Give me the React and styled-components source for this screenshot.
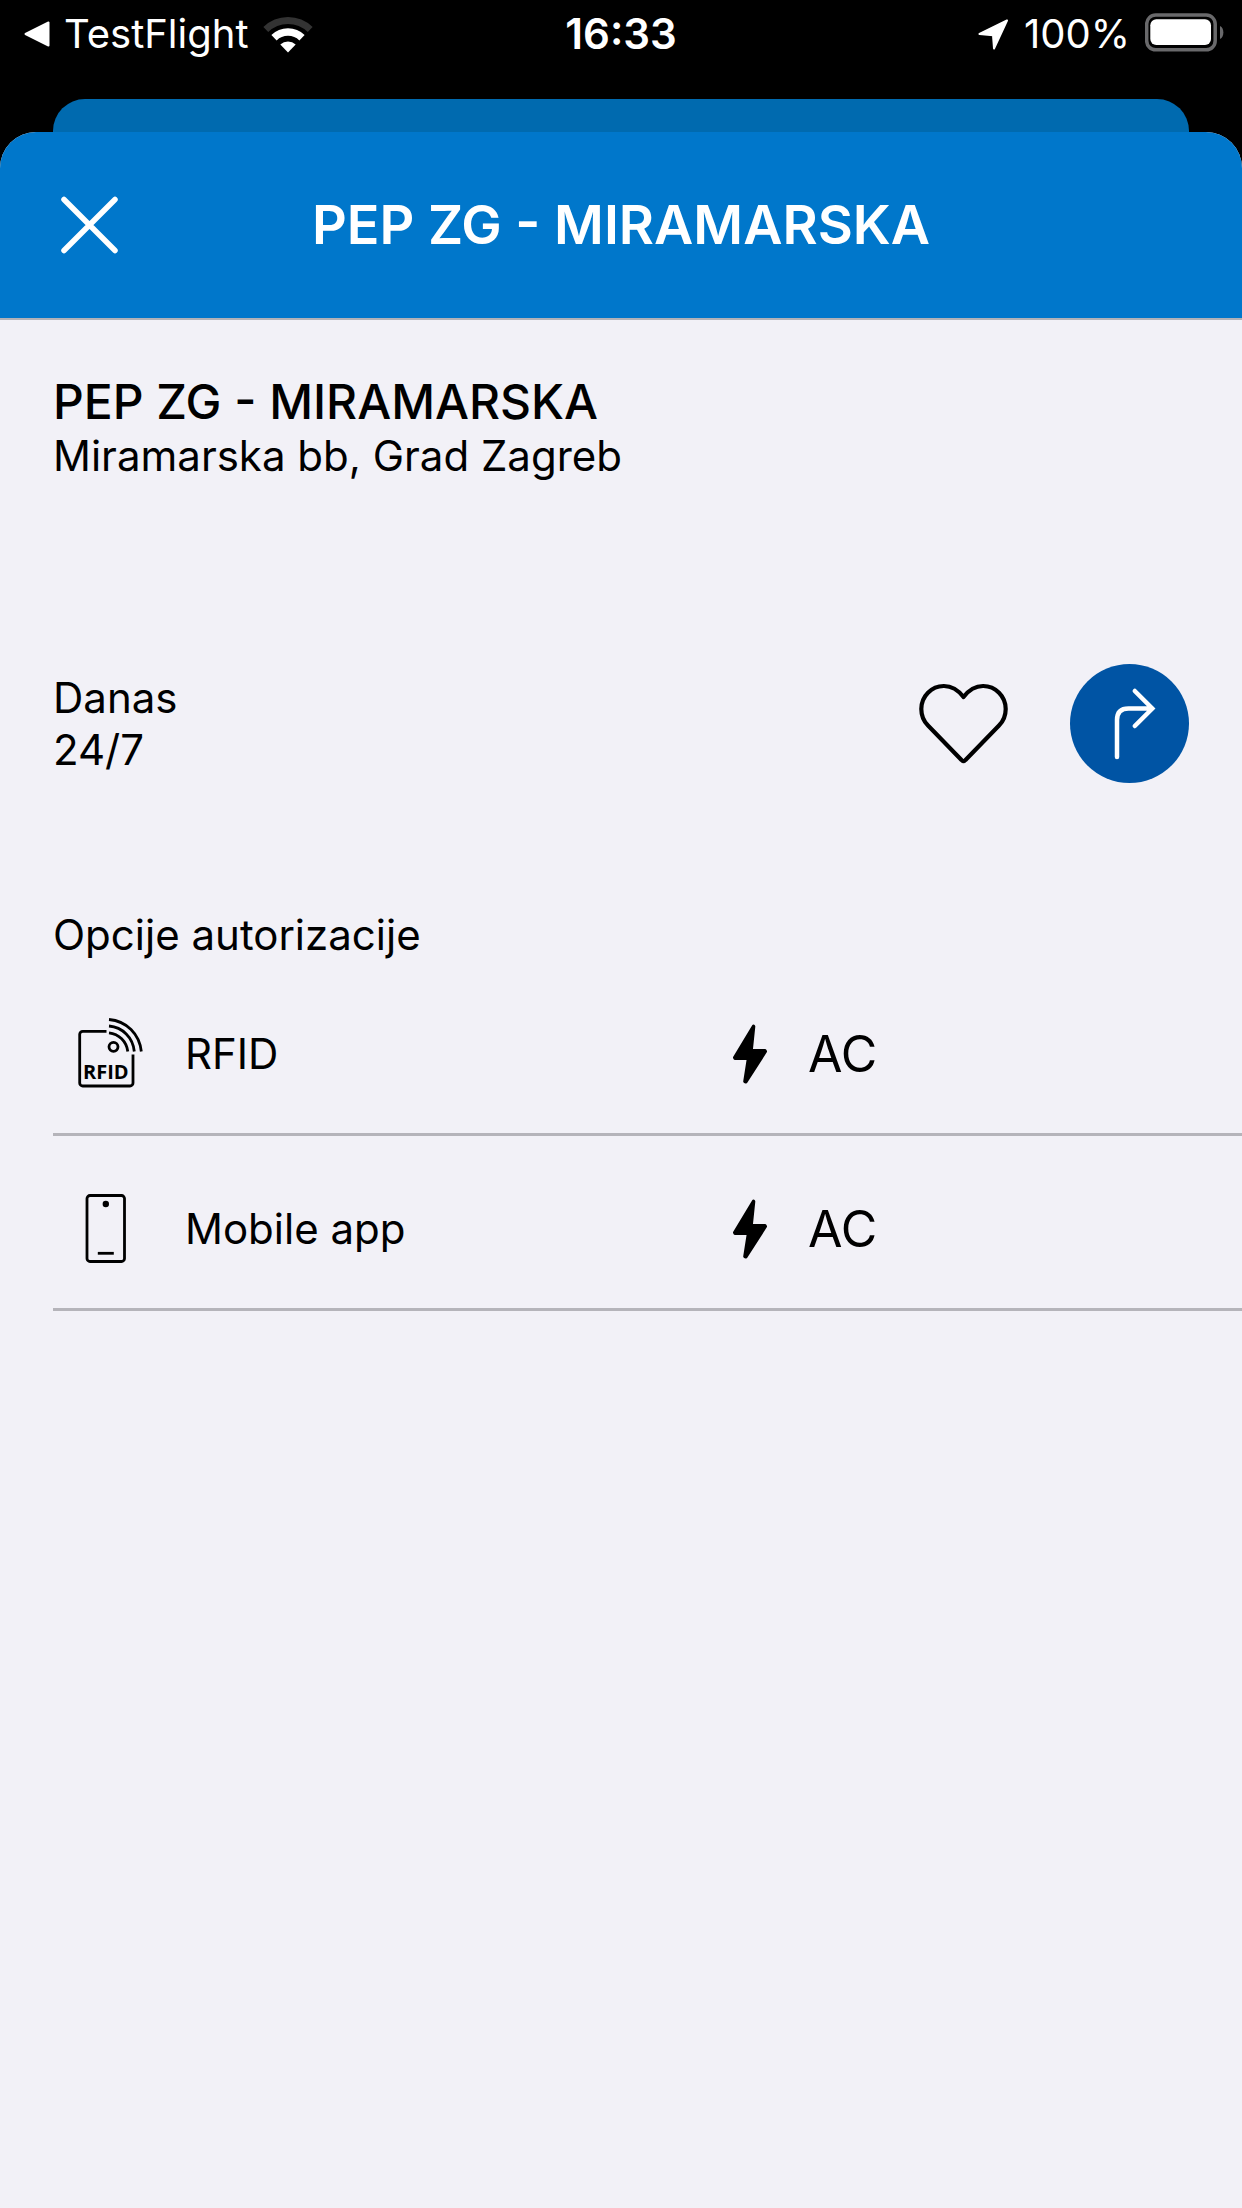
import React from 'react';
import styled, { createGlobalStyle } from 'styled-components';

const GlobalStyle = createGlobalStyle`
  *, *::before, *::after { box-sizing: border-box; }
  body {
    margin: 0;
    background: #000;
    font-family: Inter, Roboto, "Liberation Sans", sans-serif;
    color: #000;
  }
  h1, h2, h3, p, ul { margin: 0; padding: 0; }
  svg { display: block; flex: none; }
`;

const Screen = styled.div`
  display: flex;
  flex-direction: column;
  min-height: 100vh;
`;

const StatusBar = styled.div`
  display: grid;
  grid-template-columns: 1fr auto 1fr;
  align-items: center;
  height: 99px;
  padding: 0 18px 31px;
  color: #fff;
  font-size: 40px;
  line-height: 48px;
`;

const StatusGroup = styled.div`
  display: flex;
  align-items: center;
  justify-content: ${({ $end }) => ($end ? 'flex-end' : 'flex-start')};
  gap: 15px;
`;

const BackButton = styled.button`
  display: flex;
  align-items: center;
  gap: 14px;
  padding: 0 0 0 6px;
  border: 0;
  background: none;
  color: inherit;
  font: inherit;
`;

const Clock = styled.time`
  font-size: 42px;
  font-weight: 600;
`;

const SheetBehind = styled.div`
  height: 33px;
  margin: 0 53px;
  border-radius: 32px 32px 0 0;
  background: #006aaf;
`;

const Sheet = styled.main`
  flex: 1;
  display: flex;
  flex-direction: column;
  border-radius: 36px 36px 0 0;
  overflow: hidden;
  background: #f2f1f7;
`;

const SheetHeader = styled.header`
  display: grid;
  grid-template-columns: 72px 1fr 72px;
  align-items: center;
  height: 188px;
  padding: 0 53px;
  border-bottom: 2px solid #b2b2b8;
  background: #0077cb;
  color: #fff;
`;

const IconButton = styled.button`
  display: flex;
  align-items: center;
  justify-content: flex-start;
  padding: 0;
  border: 0;
  background: none;
  color: inherit;
`;

const HeaderTitle = styled.h1`
  text-align: center;
  font-size: 54px;
  font-weight: 600;
  line-height: 64px;
`;

const Content = styled.div`
  padding: 54px 0 0 53px;
`;

const StationName = styled.h2`
  font-size: 48px;
  font-weight: 500;
  line-height: 56px;
`;

const Text = styled.p`
  font-size: 42px;
  line-height: 52px;
`;

const HoursRow = styled.section`
  display: flex;
  align-items: center;
  justify-content: space-between;
  margin: 182px 53px 126px 0;
`;

const Actions = styled.div`
  display: flex;
  align-items: center;
  gap: 60px;
`;

const RouteButton = styled.button`
  display: flex;
  align-items: center;
  justify-content: center;
  width: 119px;
  height: 119px;
  padding: 0;
  border: 0;
  border-radius: 50%;
  background: #0054a4;
  color: #fff;
`;

const SectionTitle = styled.h3`
  font-size: 42px;
  font-weight: 400;
  line-height: 52px;
`;

const OptionList = styled.ul`
  list-style: none;
`;

const Option = styled.li`
  display: grid;
  grid-template-columns: 132px 14fr 13fr;
  align-items: center;
  height: 175px;
  padding-top: 13px;
  border-bottom: 3px solid #b5b4ba;
`;

const OptionIcon = styled.span`
  padding-left: 22px;
`;

const Power = styled.span`
  display: flex;
  align-items: center;
  gap: 40px;
  font-size: 50px;
  line-height: 60px;
`;

const IconText = styled.text`
  font-family: "Open Sans", "Noto Sans", sans-serif;
  font-size: 20px;
  font-weight: 700;
`;

const WifiIcon = () => (
  <svg width="50" height="38" viewBox="0 0 50 38" fill="none">
    <path d="M2.8 14.5A31.8 31.8 0 0 1 47.200 14.5" stroke="#333" strokeWidth="7" />
    <path d="M11 22.700A20 20 0 0 1 39 22.700" stroke="#fff" strokeWidth="7.500" />
    <path d="M25 37.500L17.300 29.500A11.200 11.200 0 0 1 32.700 29.500Z" fill="#fff" />
  </svg>
);

const BatteryIcon = () => (
  <svg width="79" height="44" viewBox="2 0 79 44">
    <rect x="3.700" y="3" width="68.500" height="34.800" rx="9" fill="none" stroke="#69696b" strokeWidth="3.500" />
    <rect x="7.300" y="7.300" width="60.700" height="25.700" rx="6" fill="#fff" />
    <path d="M77 14C81.500 16 81.500 25 77 27Z" fill="#69696b" />
  </svg>
);

const LocationIcon = () => (
  <svg width="31" height="31" viewBox="0 0 31 31" fill="#fff" stroke="#fff" strokeWidth="2" strokeLinejoin="round">
    <path d="M29 1.500L1.500 15L15 16.200L16 29.500Z" />
  </svg>
);

const RfidIcon = () => (
  <svg width="70" height="72" viewBox="-1 2 70 72" fill="none" stroke="#000" strokeWidth="2.800">
    <path d="M30.500 15.300H6.700a3 3 0 0 0-3 3V67a3 3 0 0 0 3 3H54a3 3 0 0 0 3-3V38.500" />
    <circle cx="37.500" cy="30.800" r="4.500" />
    <path d="M33 3.500C50.500 5 63.500 18 65.300 35.500M33 10C46.500 11.200 57 21.500 58.300 35.500M33 16.800C43 18 50.500 25.500 51.800 35.500" />
    <IconText x="7" y="63" fill="#000" stroke="none">RFID</IconText>
  </svg>
);

const PhoneIcon = () => (
  <svg width="62" height="72" viewBox="0 0 62 72" fill="none" stroke="#000" strokeWidth="2.800">
    <rect x="12" y="2.500" width="37.500" height="66" rx="3" />
    <path d="M22.800 60.300H38.800" />
    <circle cx="30.800" cy="11" r="3.200" fill="#000" stroke="none" />
  </svg>
);

const BoltIcon = () => (
  <svg width="35" height="60" viewBox="0 0 35 60" stroke="#000" strokeWidth="3" strokeLinejoin="round">
    <path d="M20.500 2L1.500 33.500L2 34.500H15.300L11.700 57.500L13 58L32.500 27.500L32 26.500H18.300L20.800 2.500Z" />
  </svg>
);

const options = [
  { label: 'RFID', power: 'AC', Icon: RfidIcon },
  { label: 'Mobile app', power: 'AC', Icon: PhoneIcon },
];

export default function App() {
  return (
    <Screen>
      <GlobalStyle />
      <StatusBar>
        <StatusGroup>
          <BackButton type="button">
            <svg width="26" height="26" viewBox="0 0 26 26" fill="#fff" stroke="#fff" strokeWidth="2" strokeLinejoin="round">
              <path d="M1.500 13L24.500 1.500V24.500Z" />
            </svg>
            TestFlight
          </BackButton>
          <WifiIcon />
        </StatusGroup>
        <Clock>16:33</Clock>
        <StatusGroup $end>
          <LocationIcon />
          <span>100%</span>
          <BatteryIcon />
        </StatusGroup>
      </StatusBar>
      <SheetBehind />
      <Sheet>
        <SheetHeader>
          <IconButton type="button" aria-label="Zatvori">
            <svg width="72" height="72" viewBox="0 0 72 72" fill="none" stroke="#fff" strokeWidth="5.500" strokeLinecap="round">
              <path d="M11 10.500L62 61.500M62 10.500L11 61.500" />
            </svg>
          </IconButton>
          <HeaderTitle>PEP ZG - MIRAMARSKA</HeaderTitle>
        </SheetHeader>
        <Content>
          <StationName>PEP ZG - MIRAMARSKA</StationName>
          <Text>Miramarska bb, Grad Zagreb</Text>
          <HoursRow>
            <div>
              <Text>Danas</Text>
              <Text>24/7</Text>
            </div>
            <Actions>
              <IconButton type="button" aria-label="Dodaj u favorite">
                <svg width="92" height="84" viewBox="0 0 92 84" fill="none" stroke="#000" strokeWidth="4.200" strokeLinejoin="round">
                  <path d="M45.500 15C40.500 8.500 34 4 26 4A22.500 23 0 0 0 3.300 27C3.300 34 6 39.500 10 43.500L43.500 78Q45.500 80.500 47.500 78L81 43.500C85 39.500 87.700 34 87.700 27A22.500 23 0 0 0 65 4C57 4 50.500 8.500 45.500 15Z" />
                </svg>
              </IconButton>
              <RouteButton type="button" aria-label="Upute">
                <svg width="119" height="119" viewBox="0 0 119 119" fill="none" stroke="#fff" strokeWidth="4.500" strokeLinecap="round" strokeLinejoin="miter">
                  <path d="M47 93V56Q47 44.500 58.500 44.500H80M64.800 27L82.300 44.500L64.800 62" />
                </svg>
              </RouteButton>
            </Actions>
          </HoursRow>
          <SectionTitle>Opcije autorizacije</SectionTitle>
          <OptionList>
            {options.map(({ label, power, Icon }) => (
              <Option key={label}>
                <OptionIcon>
                  <Icon />
                </OptionIcon>
                <Text as="span">{label}</Text>
                <Power>
                  <BoltIcon />
                  {power}
                </Power>
              </Option>
            ))}
          </OptionList>
        </Content>
      </Sheet>
    </Screen>
  );
}
